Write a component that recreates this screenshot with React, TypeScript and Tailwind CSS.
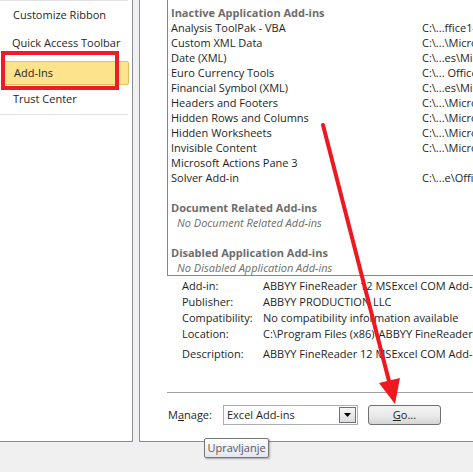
import React from "react";

const rows: [string, string][] = [
  ["Analysis ToolPak - VBA", "C:\\...ffice14\\Library\\Analysis"],
  ["Custom XML Data", "C:\\...\\Microsoft Office"],
  ["Date (XML)", "C:\\...es\\Microsoft"],
  ["Euro Currency Tools", "C:\\... Office14\\Library"],
  ["Financial Symbol (XML)", "C:\\...es\\Microsoft"],
  ["Headers and Footers", "C:\\...\\Microsoft Office"],
  ["Hidden Rows and Columns", "C:\\...\\Microsoft Office"],
  ["Hidden Worksheets", "C:\\...\\Microsoft Office"],
  ["Invisible Content", "C:\\...\\Microsoft Office"],
  ["Microsoft Actions Pane 3", ""],
  ["Solver Add-in", "C:\\...e\\Office14\\Library"],
];

const details: [string, string][] = [
  ["Add-in:", "ABBYY FineReader 12 MSExcel COM Add-In"],
  ["Publisher:", "ABBYY PRODUCTION LLC"],
  ["Compatibility:", "No compatibility information available"],
  ["Location:", "C:\\Program Files (x86)\\ABBYY FineReader 12\\FRIntegration.dll"],
];

export default function App() {
  return (
    <div
      className="relative w-[473px] h-[472px] overflow-hidden bg-[#f0f0f0] text-[11px] text-[#1e1e1e]"
      style={{ fontFamily: '"Open Sans", "Noto Sans", sans-serif' }}
    >
      <div className="flex h-[442px]">
        {/* Left nav */}
        <div className="w-[133px] shrink-0 bg-white border-r border-b border-[#898c95] flex flex-col">
          <div className="h-px bg-[#e3e3e3] mr-[4px]" />
          <div className="h-[28px] flex items-center pl-[13px] text-[#262626]">Customize Ribbon</div>
          <div className="h-[28px] flex items-center pl-[12px] text-[#262626]">Quick Access Toolbar</div>
          <div className="h-[4px]" />
          <div className="h-[24px] ml-[4px] mr-[3px] flex items-center pl-[9px] bg-[#fde38c] border border-[#e8bd5c] rounded-r-[2px] text-[#262626]">
            Add-Ins
          </div>
          <div className="h-[28px] flex items-center pl-[13px] text-[#262626]">Trust Center</div>
          <div className="h-px bg-[#e3e3e3] mr-[4px] mt-[1px]" />
        </div>
        <div className="w-[6px] shrink-0" />
        {/* Right panel */}
        <div className="flex-1 bg-white border-l border-b border-[#898c95] overflow-hidden flex flex-col">
          {/* list box */}
          <div className="ml-[27px] w-[600px] h-[276px] shrink-0 border-l border-b border-[#828790] pt-[5px] pl-[3px]">
            <div className="h-[15px] leading-[15px] font-bold text-[#6d6d6d]">Inactive Application Add-ins</div>
            {rows.map(([a, b]) => (
              <div key={a} className="h-[15px] leading-[15px] flex whitespace-nowrap">
                <div className="w-[251px] shrink-0">{a}</div>
                <div>{b}</div>
              </div>
            ))}
            <div className="h-[15px]" />
            <div className="h-[15px] leading-[15px] font-bold text-[#6d6d6d]">Document Related Add-ins</div>
            <div className="h-[15px] leading-[15px] italic text-[#6d6d6d] pl-[6px]">No Document Related Add-ins</div>
            <div className="h-[15px]" />
            <div className="h-[15px] leading-[15px] font-bold text-[#6d6d6d]">Disabled Application Add-ins</div>
            <div className="h-[15px] leading-[15px] italic text-[#6d6d6d] pl-[6px]">No Disabled Application Add-ins</div>
          </div>
          {/* details */}
          <div className="mt-[2px] ml-[42px] w-[600px]">
            {details.map(([a, b]) => (
              <div key={a} className="h-[16px] leading-[16px] flex whitespace-nowrap">
                <div className="w-[81px] shrink-0">{a}</div>
                <div>{b}</div>
              </div>
            ))}
            <div className="h-[4px]" />
            <div className="h-[16px] leading-[16px] flex whitespace-nowrap">
              <div className="w-[81px] shrink-0">Description:</div>
              <div>ABBYY FineReader 12 MSExcel COM Add-In</div>
            </div>
          </div>
          {/* separator */}
          <div className="mt-[30px] ml-[27px] h-px bg-[#a0a0a0] shrink-0" />
          {/* manage row */}
          <div className="mt-[12px] ml-[28px] h-[20px] flex items-center">
            <div className="w-[55px]">
              M<span className="underline">a</span>nage:
            </div>
            <div className="w-[135px] h-[20px] border border-[#abadb3] bg-white flex items-center pr-px">
              <div className="flex-1 pl-[3px]">Excel Add-ins</div>
              <div className="w-[17px] h-[16px] border border-[#707070] bg-gradient-to-b from-[#f6f6f6] to-[#dcdcdc] flex items-center justify-center">
                <svg width="7" height="4" viewBox="0 0 7 4">
                  <path d="M0 0 H7 L3.5 4 Z" fill="#000" />
                </svg>
              </div>
            </div>
            <div className="ml-[10px] w-[73px] h-[20px] rounded-[3px] border border-[#707070] bg-gradient-to-b from-[#f3f3f3] via-[#ebebeb] to-[#d5d5d5] flex items-center justify-center">
              <span>
                <span className="underline">G</span>o...
              </span>
            </div>
          </div>
        </div>
      </div>

      {/* red highlight box */}
      <div className="absolute left-[1px] top-[51px] w-[118px] h-[39px] border-[4px] border-[#ee1c24]" />

      {/* red arrow */}
      <svg className="absolute left-0 top-0" width="473" height="472" viewBox="0 0 473 472">
        <line x1="323" y1="125" x2="390" y2="385" stroke="#f01820" strokeWidth="4" strokeLinecap="round" />
        <path d="M379 383 L400 378 L395 404 Z" fill="#f01820" />
      </svg>

      {/* tooltip */}
      <div className="absolute left-[204px] top-[438px] w-[65px] h-[20px] border border-[#767676] rounded-[2px] bg-gradient-to-b from-white to-[#e4e5f0] shadow-[1px_1px_2px_rgba(0,0,0,0.3)] flex items-center justify-center text-[#575757]">
        Upravljanje
      </div>
    </div>
  );
}
